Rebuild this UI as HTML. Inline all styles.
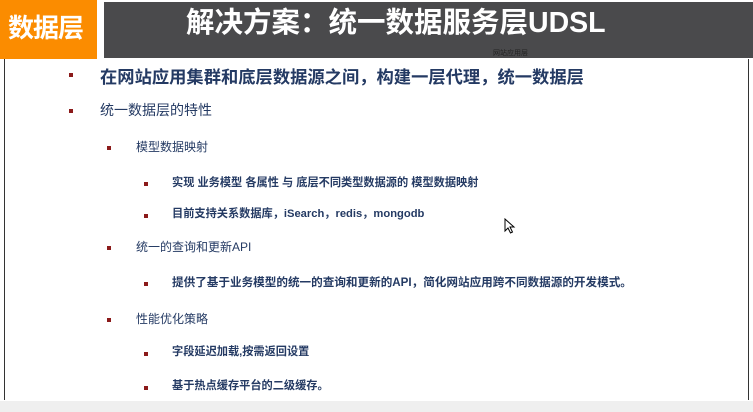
<!DOCTYPE html><html><head><meta charset="utf-8"><style>
body{margin:0;width:753px;height:412px;background:#fff;position:relative;overflow:hidden;font-family:"Liberation Sans","Noto Sans CJK SC",sans-serif;}
.a{position:absolute}
.t{position:absolute;color:#243a63;white-space:nowrap;font-weight:bold}
.b{position:absolute;width:4px;height:4px;background:#8b1a1a}
</style></head><body>
<div class="a" style="left:0;top:0;width:97px;height:59px;background:#fb8c00"></div>
<div class="a" style="left:8px;top:8px;color:#fff;font-size:26px;font-weight:bold;letter-spacing:-1px">数据层</div>
<div class="a" style="left:104px;top:2px;width:649px;height:56px;background:#4a4a4c"></div>
<div class="a" style="left:186px;top:0px;color:#fff;font-size:28.5px;font-weight:bold;white-space:nowrap">解决方案：统一数据服务层UDSL</div>
<div class="a" style="left:493px;top:48px;color:#222;font-size:7px">网站应用层</div>
<div class="a" style="left:4px;top:59px;width:1px;height:341px;background:#333"></div>
<div class="a" style="left:748px;top:59px;width:1px;height:341px;background:#333"></div>
<div class="a" style="left:0;top:401px;width:753px;height:11px;background:#efefef"></div>
<div class="b" style="left:69px;top:73px"></div><div class="t" style="left:100px;top:63px;font-size:17.3px">在网站应用集群和底层数据源之间，构建一层代理，统一数据层</div>
<div class="b" style="left:69px;top:109px"></div><div class="t" style="left:100px;top:100px;font-size:14px;font-weight:normal">统一数据层的特性</div>
<div class="b" style="left:107px;top:146px"></div><div class="t" style="left:136px;top:138px;font-size:12px;font-weight:normal">模型数据映射</div>
<div class="b" style="left:144px;top:182px"></div><div class="t" style="left:172px;top:174px;font-size:11.2px">实现 业务模型 各属性 与 底层不同类型数据源的 模型数据映射</div>
<div class="b" style="left:144px;top:214px"></div><div class="t" style="left:172px;top:205px;font-size:11.2px">目前支持关系数据库，iSearch，redis，mongodb</div>
<div class="b" style="left:107px;top:246px"></div><div class="t" style="left:136px;top:238px;font-size:12px;font-weight:normal">统一的查询和更新API</div>
<div class="b" style="left:144px;top:282px"></div><div class="t" style="left:172px;top:274px;font-size:11.6px">提供了基于业务模型的统一的查询和更新的API，简化网站应用跨不同数据源的开发模式。</div>
<div class="b" style="left:107px;top:318px"></div><div class="t" style="left:136px;top:310px;font-size:12px;font-weight:normal">性能优化策略</div>
<div class="b" style="left:144px;top:352px"></div><div class="t" style="left:172px;top:343px;font-size:11.2px">字段延迟加载,按需返回设置</div>
<div class="b" style="left:144px;top:386px"></div><div class="t" style="left:172px;top:377px;font-size:11.2px">基于热点缓存平台的二级缓存。</div>
<svg class="a" style="left:504px;top:218px" width="12" height="17" viewBox="0 0 12 17"><path d="M1 1 L1 13 L4 10 L6.5 15 L8.5 14 L6 9 L10 9 Z" fill="#fff" stroke="#000" stroke-width="1"/></svg>
</body></html>
